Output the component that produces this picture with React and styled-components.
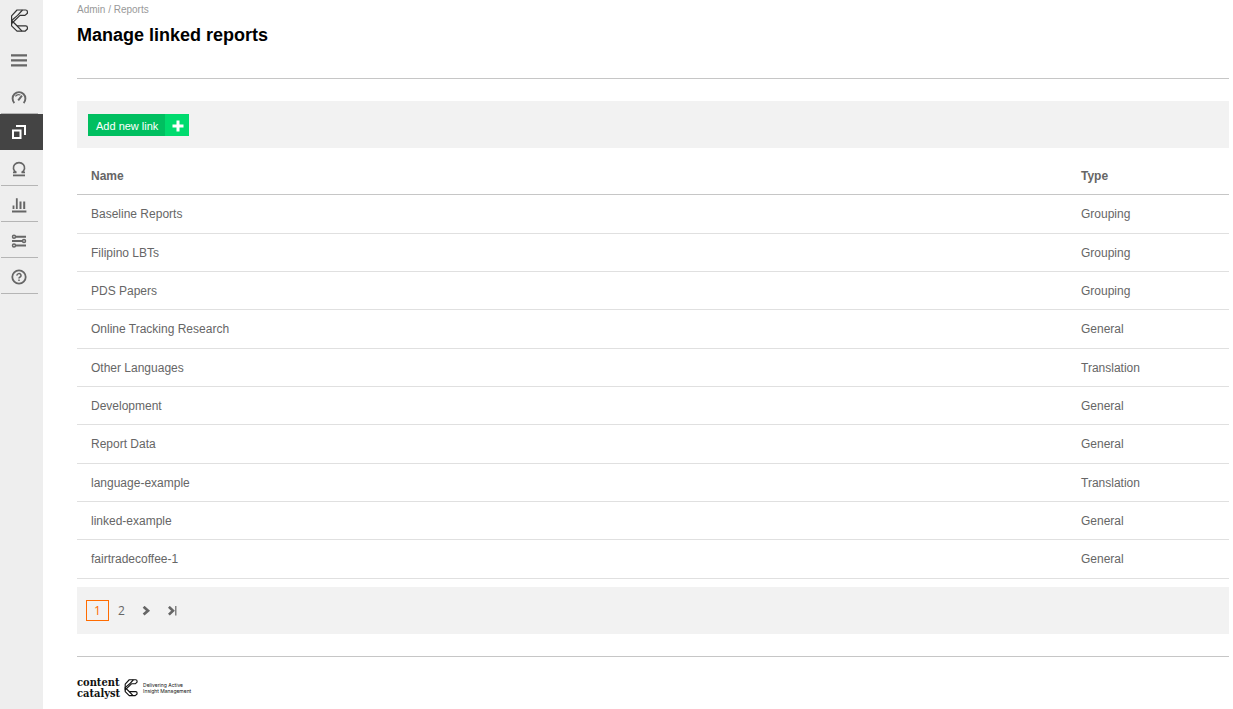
import React from 'react';
import styled, { createGlobalStyle } from 'styled-components';

const sans = "'Liberation Sans', Arial, sans-serif";
const grey = '#666';
const panel = '#f2f2f2';

const GlobalStyle = createGlobalStyle`
  *, *::before, *::after {
    box-sizing: border-box;
  }
  body {
    margin: 0;
    background: #fff;
    color: ${ grey };
    font-family: ${ sans };
    font-size: 12px;
  }
`;

const Page = styled.div`
  display: flex;
  min-height: 100vh;
`;

const Sidebar = styled.nav`
  flex: none;
  width: 43px;
  background: #eee;
`;

const Brand = styled.a`
  display: flex;
  height: 42px;
  padding: 9px 10px;
  color: #333;
`;

const MenuButton = styled.button`
  display: flex;
  align-items: center;
  width: 38px;
  height: 36px;
  padding: 0 11px;
  border: 0;
  background: none;
  color: ${ grey };
  cursor: pointer;
`;

const NavItem = styled.a`
  display: flex;
  align-items: center;
  height: 36px;
  margin: ${ p => p.$active ? '0' : '0 5px 0 1px' };
  padding: ${ p => p.$active ? '0 11px' : '2px 10px 0' };
  border-bottom: ${ p => p.$active ? '0' : '1px solid #b5b5b5' };
  background: ${ p => p.$active ? '#444' : 'none' };
  color: ${ p => p.$active ? '#fff' : grey };
  & > svg {
    flex: none;
  }
`;

const Main = styled.main`
  flex: 1;
  min-width: 0;
  padding: 0 4px 0 34px;
`;

const PageHeader = styled.header`
  height: 79px;
  padding-top: 4px;
  border-bottom: 1px solid #c6c6c6;
`;

const Breadcrumb = styled.div`
  font-size: 10px;
  line-height: 12px;
  color: #999;
  & > a {
    color: inherit;
    text-decoration: none;
  }
`;

const Title = styled.h1`
  margin: 8px 0 0;
  font-size: 18px;
  line-height: 22px;
  color: #000;
`;

const Toolbar = styled.div`
  display: flex;
  align-items: center;
  height: 47px;
  margin-top: 22px;
  padding: 1px 11px 0;
  background: ${ panel };
`;

const AddButton = styled.button`
  display: flex;
  height: 22px;
  padding: 0 0 0 8px;
  border: 0;
  background: #00bf60;
  color: #fff;
  font-family: ${ sans };
  font-size: 11px;
  line-height: 24px;
  cursor: pointer;
`;

const AddIcon = styled.span`
  display: flex;
  align-items: center;
  justify-content: center;
  width: 24px;
  height: 22px;
  margin-left: 7px;
  padding: 2px 0 0 2px;
  background: #00db6e;
`;

const Table = styled.table`
  width: 100%;
  border-collapse: separate;
  border-spacing: 0;
  table-layout: fixed;
`;

const HeadCell = styled.th`
  width: ${ p => p.$width || 'auto' };
  height: 47px;
  padding: 10px 14px 0;
  border-bottom: 1px solid #c6c6c6;
  text-align: left;
  line-height: 14px;
`;

const Cell = styled.td`
  padding: 0 14px;
  border-bottom: 1px solid #e0e0e0;
  line-height: 14px;
`;

const Row = styled.tr`
  height: 38px;
  &:nth-child(3n + 1) {
    height: 39px;
  }
`;

const Pager = styled.nav`
  display: flex;
  align-items: center;
  gap: 1px;
  height: 47px;
  margin-top: 8px;
  padding: 0 9px;
  background: ${ panel };
`;

const PageLink = styled.a`
  display: flex;
  align-items: center;
  justify-content: center;
  width: ${ p => p.$wide ? '26px' : '23px' };
  height: 21px;
  border: 1px solid ${ p => p.$current ? '#ff6c00' : 'transparent' };
  color: ${ p => p.$current ? '#ff6c00' : grey };
  font-family: 'Open Sans', sans-serif;
  font-size: 12px;
  line-height: 19px;
  text-decoration: none;
`;

const Footer = styled.footer`
  display: flex;
  align-items: center;
  margin-top: 22px;
  padding-top: 20px;
  border-top: 1px solid #c6c6c6;
  color: #111;
`;

const Wordmark = styled.strong`
  margin-right: 4px;
  font-family: 'DejaVu Serif Condensed', 'DejaVu Serif', serif;
  font-size: 11px;
  line-height: 11px;
`;

const Strapline = styled.span`
  margin-left: 4px;
  font-family: Inter, sans-serif;
  font-size: 5px;
  line-height: 6px;
`;

const Logo = ({ width, height, stroke = 1.2 }) => (
  <svg width={ width } height={ height } viewBox='0 0 20 24' fill='none' stroke='currentColor' strokeWidth={ stroke } strokeLinejoin='round'>
    <path d='M7 1H15.6Q17.4 1 17.4 2.8V4.2L15 6.4H10L1.6 14.5V6.8Z' />
    <path d='M12.5 1L7.6 6.4L1.6 11.5L7.2 17L12 22.2' />
    <path d='M1.6 11.5V16.8L7 22.2H15L17.4 20V18.4Q17.4 16.8 15.6 16.8H7.2' />
  </svg>
);

const MenuIcon = () => (
  <svg width='16' height='14' viewBox='0 0 16 14' fill='currentColor'>
    <path d='M0 1.2h16v2.4H0zM0 6.2h16v2.4H0zM0 11.2h16v2.4H0z' />
  </svg>
);

const GaugeIcon = () => (
  <svg width='16' height='16' viewBox='0 0 16 16' fill='none' stroke='currentColor' strokeWidth='1.9'>
    <path d='M3.4 14A6.4 6.4 0 1 1 12.6 14' />
    <path d='M7.2 11.4L11 6.6' />
    <path d='M4.4 7.4A4 4 0 0 1 9.4 6' strokeWidth='1.2' />
  </svg>
);

const LinkedIcon = () => (
  <svg width='16' height='16' viewBox='0 0 16 16' fill='none' stroke='currentColor' strokeWidth='2'>
    <path d='M2 6.5h7.5v7.5H2z' />
    <path d='M5 2h9v9' />
  </svg>
);

const UserIcon = () => (
  <svg width='16' height='16' viewBox='0 0 16 16' fill='none' stroke='currentColor' strokeWidth='1.8'>
    <path d='M2 11.4H5.4A5.6 5.2 0 1 1 10.6 11.4H14' strokeWidth='1.7' />
    <path d='M2 14.4H14' />
  </svg>
);

const ChartIcon = () => (
  <svg width='16' height='16' viewBox='0 0 16 16' fill='currentColor'>
    <path d='M1.6 8.4h1.8V12H1.6zM4.9 1.3h1.8V12H4.9zM8.5 4.5h2V12h-2zM12.2 4.5h2V12h-2zM1 13.6h14.4v1.9H1z' />
  </svg>
);

const SettingsIcon = () => (
  <svg width='16' height='16' viewBox='0 0 16 16' fill='none' stroke='currentColor' strokeWidth='1.5'>
    <circle cx='3' cy='3.7' r='1.5' />
    <circle cx='13' cy='8' r='1.5' />
    <circle cx='3' cy='12.4' r='1.5' />
    <path d='M5 3.7H15M1 8H11M5 12.4H15' strokeWidth='2' />
  </svg>
);

const HelpIcon = () => (
  <svg width='16' height='16' viewBox='0 0 16 16' fill='none' stroke='currentColor' strokeWidth='1.8'>
    <circle cx='8' cy='8' r='6.7' />
    <path d='M6 6.7A2 1.9 0 1 1 8.8 8.2Q8 8.6 8 9.5M8 10.5V12' strokeWidth='1.5' />
  </svg>
);

const PlusIcon = () => (
  <svg width='12' height='12' viewBox='0 0 12 12' fill='#fff'>
    <path d='M4.5 0.5h3v4h4v3h-4v4h-3v-4h-4v-3h4z' />
  </svg>
);

const NextIcon = () => (
  <svg width='10' height='10' viewBox='0 0 10 10' fill='none' stroke='currentColor' strokeWidth='2.7'>
    <path d='M1.6 .8L6 4.7L1.6 8.6' />
  </svg>
);

const LastIcon = () => (
  <svg width='10' height='10' viewBox='0 0 10 10' fill='none' stroke='currentColor' strokeWidth='2.6'>
    <path d='M.9 .8L5 4.7L.9 8.6' />
    <path d='M7.8 0V9.6' strokeWidth='1.2' />
  </svg>
);

const sections = [
  { label: 'Dashboard', Icon: GaugeIcon },
  { label: 'Reports', Icon: LinkedIcon, active: true },
  { label: 'Users', Icon: UserIcon },
  { label: 'Statistics', Icon: ChartIcon },
  { label: 'Settings', Icon: SettingsIcon },
  { label: 'Help', Icon: HelpIcon },
];

const reports = [
  ['Baseline Reports', 'Grouping'],
  ['Filipino LBTs', 'Grouping'],
  ['PDS Papers', 'Grouping'],
  ['Online Tracking Research', 'General'],
  ['Other Languages', 'Translation'],
  ['Development', 'General'],
  ['Report Data', 'General'],
  ['language-example', 'Translation'],
  ['linked-example', 'General'],
  ['fairtradecoffee-1', 'General'],
];

const App = () => (
  <Page>
    <GlobalStyle />
    <Sidebar>
      <Brand href='#' aria-label='Home'><Logo width={ 20 } height={ 24 } /></Brand>
      <MenuButton type='button' aria-label='Menu'><MenuIcon /></MenuButton>
      { sections.map(({ label, Icon, active }) => (
        <NavItem key={ label } href='#' aria-label={ label } $active={ active }>
          <Icon />
        </NavItem>
      )) }
    </Sidebar>
    <Main>
      <PageHeader>
        <Breadcrumb><a href='#'>Admin</a> / <a href='#'>Reports</a></Breadcrumb>
        <Title>Manage linked reports</Title>
      </PageHeader>
      <Toolbar>
        <AddButton type='button'>
          Add new link
          <AddIcon><PlusIcon /></AddIcon>
        </AddButton>
      </Toolbar>
      <Table>
        <thead>
          <tr>
            <HeadCell>Name</HeadCell>
            <HeadCell $width='162px'>Type</HeadCell>
          </tr>
        </thead>
        <tbody>
          { reports.map(([name, type]) => (
            <Row key={ name }>
              <Cell>{ name }</Cell>
              <Cell>{ type }</Cell>
            </Row>
          )) }
        </tbody>
      </Table>
      <Pager aria-label='Pages'>
        <PageLink href='#' $current>1</PageLink>
        <PageLink href='#'>2</PageLink>
        <PageLink href='#' $wide aria-label='Next page'><NextIcon /></PageLink>
        <PageLink href='#' aria-label='Last page'><LastIcon /></PageLink>
      </Pager>
      <Footer>
        <Wordmark>content<br />catalyst</Wordmark>
        <Logo width={ 15 } height={ 20 } stroke={ 1.5 } />
        <Strapline>Delivering Active<br />Insight Management</Strapline>
      </Footer>
    </Main>
  </Page>
);

export default App;
